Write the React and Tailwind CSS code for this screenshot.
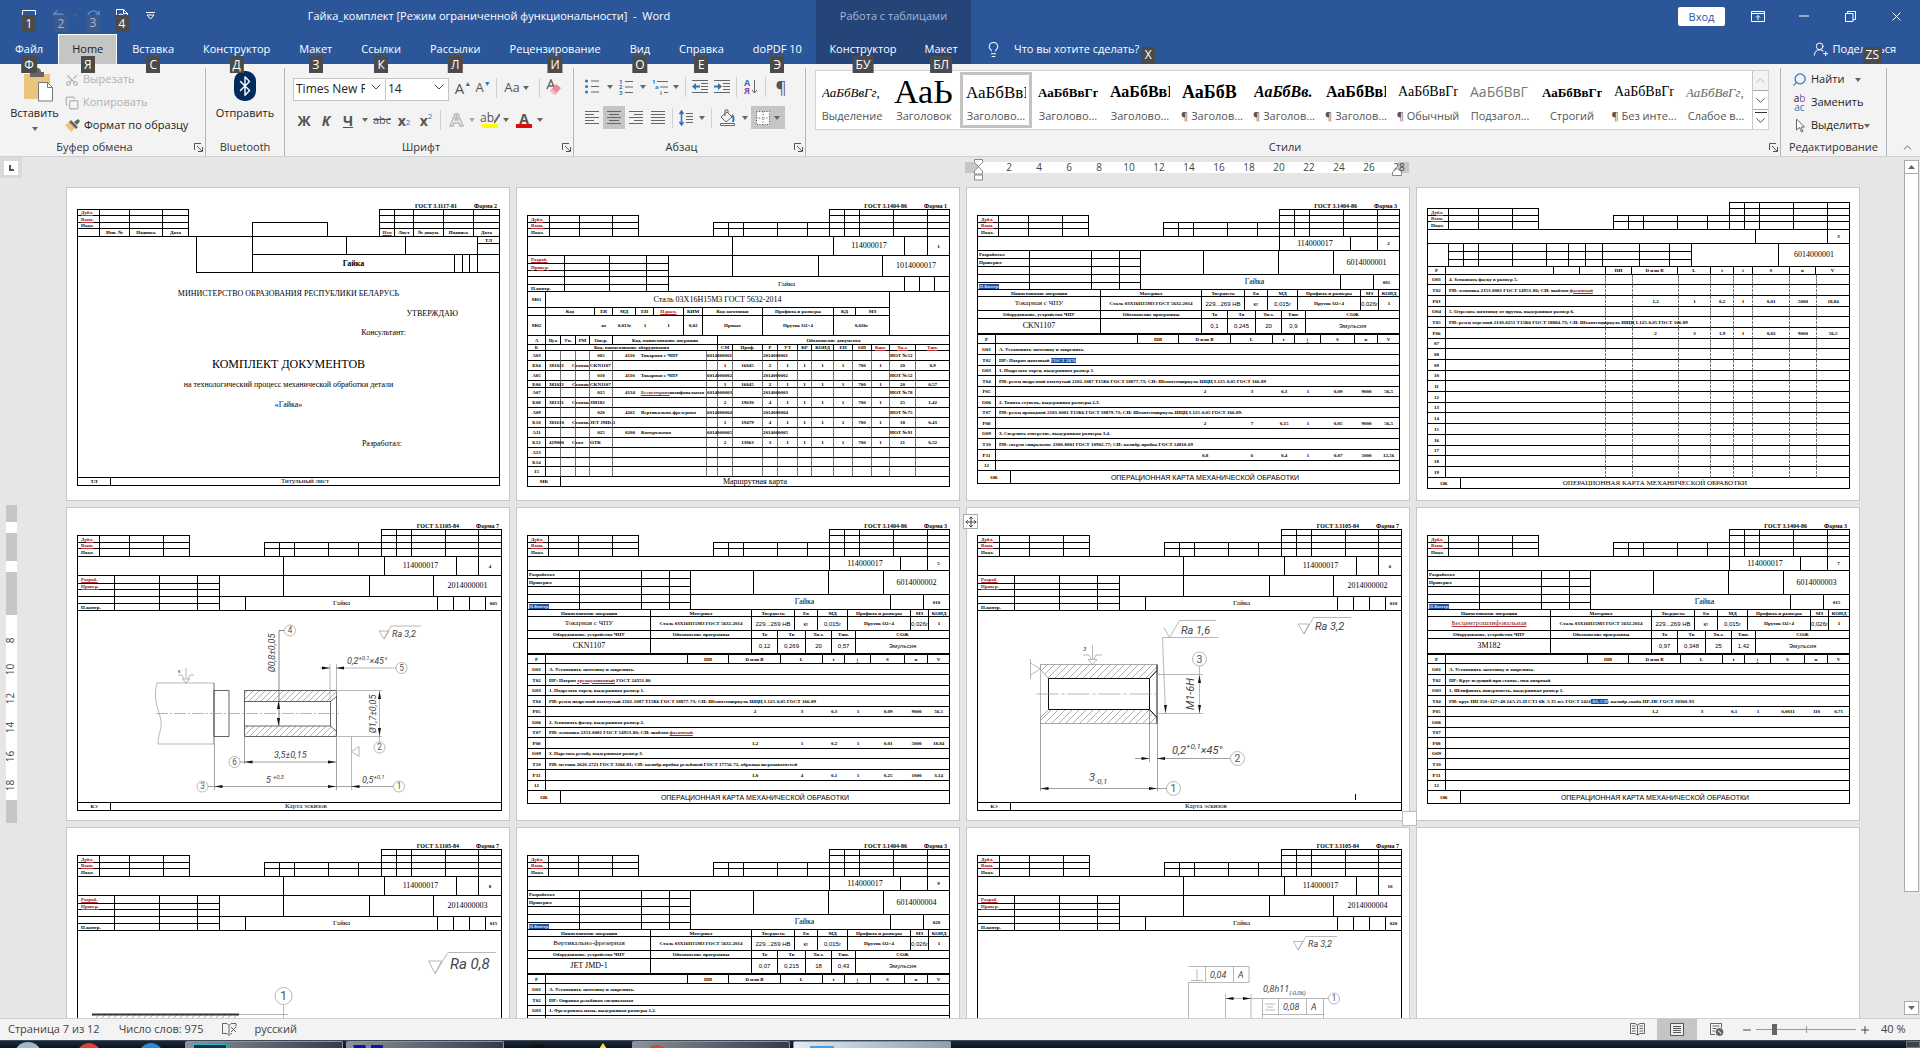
import React, { useState } from "react";
import clsx from "clsx";
import {
  Bluetooth,
  ChevronDown,
  ChevronUp,
  Copy,
  Lightbulb,
  Minus,
  Move,
  Plus,
  RotateCw,
  Scissors,
  Search,
  Undo2,
  UserRoundPlus,
  X,
} from "lucide-react";

/* ---------- small shared pieces ---------- */

const KeyTip = ({ children, faded, className = "-bottom-2.5 left-1/2 -translate-x-1/2" }) => (
  <kbd
    className={clsx(
      "absolute z-10 flex h-[17px] min-w-[14px] items-center justify-center px-[3px] font-['Open_Sans'] text-[12px] leading-none",
      faded ? "bg-[#3c5a8c] text-[#a9b8d3]" : "bg-[#4b4b4b] text-white",
      className
    )}
  >
    {children}
  </kbd>
);

const Caret = ({ className = "w-3" }) => (
  <span className={clsx("flex shrink-0 justify-center", className)}>
    <svg width="6" height="4" viewBox="0 0 6 4">
      <path d="M0 0h6L3 4z" fill="#666" />
    </svg>
  </span>
);

const Sep = () => <span className="mx-[3px] h-5 w-px shrink-0 bg-[#d0d0d0]" />;

const Tool = ({ label, active, className = "w-[22px]", children }) => (
  <button
    aria-label={label}
    className={clsx(
      "flex h-[23px] shrink-0 items-center justify-center text-[#555]",
      active && "bg-[#c5c5c5]",
      className
    )}
  >
    {children}
  </button>
);

const Launcher = () => (
  <button aria-label="Параметры группы" className="absolute right-[2px] bottom-[4px]">
    <svg width="9" height="9" viewBox="0 0 9 9" fill="none" stroke="#555">
      <path d="M.5 7V.5H7M3 3l5 5M8.500 4v4.500H4" />
    </svg>
  </button>
);

const Group = ({ label, launcher, className, children }) => (
  <section className={clsx("relative flex shrink-0 flex-col border-r border-[#b5b5b5]", className)}>
    <div className="min-h-0 flex-1">{children}</div>
    <h2 className="h-[18px] text-center text-[11px] leading-[18px] text-[#333]">{label}</h2>
    {launcher && <Launcher />}
  </section>
);

const Lines = ({ rows, color = "#666" }) => (
  <svg width="16" height="14" viewBox="0 0 16 14" stroke={color}>
    {rows.map(([a, b], i) => (
      <path key={i} d={`M${a} ${i * 3 + 0.5}H${b}`} />
    ))}
  </svg>
);

/* ---------- title bar and tabs ---------- */

const TABS = [
  ["Файл", "Ф"],
  ["Home", "Я"],
  ["Вставка", "С"],
  ["Конструктор", "Д"],
  ["Макет", "З"],
  ["Ссылки", "К"],
  ["Рассылки", "Л"],
  ["Рецензирование", "И"],
  ["Вид", "О"],
  ["Справка", "Е"],
  ["doPDF 10", "Э"],
];

const Tab = ({ label, tip, active, onClick }) => (
  <button
    onClick={onClick}
    className={clsx(
      "relative h-[30px] border px-[13px] text-[11px] whitespace-nowrap",
      active ? "border-white border-b-[#c5c5c5] bg-[#c5c5c5] text-[#222]" : "border-transparent text-white"
    )}
  >
    {label}
    <KeyTip>{tip}</KeyTip>
  </button>
);

const Header = () => {
  const [tab, setTab] = useState("Home");
  return (
    <header className="relative z-20 flex h-16 shrink-0 bg-[#2b579a] text-white">
      <div className="flex w-[816px] shrink-0 flex-col">
        <div className="flex h-[34px] items-center pb-[2px]">
          <div className="flex w-[200px] items-center pl-[22px]">
            <button aria-label="Сохранить" className="relative h-4 w-[14px]">
              <svg width="14" height="14" viewBox="0 0 14 14" fill="none" stroke="#fff">
                <path d="M.5 1.500h13v12H.5zM3 14V8h8v6" />
              </svg>
              <KeyTip className="top-[7px] left-0">1</KeyTip>
            </button>
            <button aria-label="Отменить" className="relative ml-[15px] flex w-6 items-center text-[#6e8dbd]">
              <Undo2 size={16} className="shrink-0" />
              <Caret className="ml-1 w-2 opacity-50" />
              <KeyTip faded className="top-[7px] left-[3px]">2</KeyTip>
            </button>
            <button aria-label="Повторить" className="relative ml-[11px] text-[#6e8dbd]">
              <RotateCw size={15} />
              <KeyTip faded className="top-[6px] left-0">3</KeyTip>
            </button>
            <button aria-label="Просмотр и печать" className="relative ml-[14px] h-4 w-4">
              <svg width="14" height="15" viewBox="0 0 14 15" fill="none" stroke="#fff">
                <path d="M1.500 14V.5h7l4 4V9M8.500.5v4h4" />
                <circle cx="6" cy="8" r="3" />
              </svg>
              <KeyTip className="top-[7px] left-0">4</KeyTip>
            </button>
            <button aria-label="Настройка панели быстрого доступа" className="ml-[15px]">
              <svg width="9" height="8" viewBox="0 0 9 8" fill="none" stroke="#fff">
                <path d="M0 .5h9M1 3l3.500 4L8 3z" />
              </svg>
            </button>
          </div>
          <h1 className="flex-1 pr-[38px] text-center text-[11px] whitespace-pre">
            {"Гайка_комплект [Режим ограниченной функциональности]  -  Word"}
          </h1>
        </div>
        <nav className="flex gap-px pl-[1px]">
          {TABS.map(([label, tip]) => (
            <Tab key={label} label={label} tip={tip} active={tab === label} onClick={() => setTab(label)} />
          ))}
        </nav>
      </div>

      <div className="flex w-[155px] shrink-0 flex-col bg-[#254478]">
        <p className="h-[34px] text-center text-[11px] leading-8 text-[#a3b8da]">Работа с таблицами</p>
        <div className="flex justify-center">
          <Tab label="Конструктор" tip="БУ" />
          <Tab label="Макет" tip="БЛ" />
        </div>
      </div>

      <div className="flex flex-1 flex-col">
        <div className="flex h-[34px] items-center justify-end pr-[16px] pb-[2px]">
          <button className="mr-[26px] h-[19px] w-[47px] rounded-xs bg-white text-[11px] leading-none text-[#2b579a]">
            Вход
          </button>
          <button aria-label="Параметры ленты">
            <svg width="14" height="11" viewBox="0 0 14 11" fill="none" stroke="#fff">
              <path d="M.5.5h13v10H.5zM.5 2.500h13M7 9V4.500M5 6.500l2-2 2 2" />
            </svg>
          </button>
          <button aria-label="Свернуть" className="ml-[34px]">
            <svg width="10" height="2" viewBox="0 0 10 2">
              <path d="M0 1h10" stroke="#fff" />
            </svg>
          </button>
          <button aria-label="Окно" className="ml-[36px]">
            <svg width="11" height="11" viewBox="0 0 11 11" fill="none" stroke="#fff">
              <path d="M.5 2.500h7.500v8H.5zM2.500 2.500v-2h8v8H8" />
            </svg>
          </button>
          <button aria-label="Закрыть" className="ml-[33px]">
            <X size={15} strokeWidth={1.500} />
          </button>
        </div>
        <div className="flex h-[30px] items-center justify-between pr-6 pl-[14px] text-[11px]">
          <button className="relative flex items-center gap-[12px]">
            <Lightbulb size={17} strokeWidth={1.500} />
            Что вы хотите сделать?
            <KeyTip className="top-[6px] -right-4">X</KeyTip>
          </button>
          <button className="relative flex items-center gap-1">
            <UserRoundPlus size={16} strokeWidth={1.500} />
            Поделиться
            <KeyTip className="top-[6px] right-[14px]">ZS</KeyTip>
          </button>
        </div>
      </div>
    </header>
  );
};

/* ---------- ribbon ---------- */

const STYLES = [
  ["АаБбВвГг,", "Выделение", "text-[13px] italic"],
  ["АаЬ", "Заголовок", "text-[34px]"],
  ["АаБбВвГ", "Заголово...", "text-[17px]"],
  ["АаБбВвГг", "Заголово...", "text-[13px] font-bold"],
  ["АаБбВвГ", "Заголово...", "font-['Liberation_Sans'] text-[16px] font-bold"],
  ["АаБбВ", "¶ Заголов...", "text-[18px] font-bold"],
  ["АаБбВв.", "¶ Заголов...", "text-[16px] font-bold italic"],
  ["АаБбВвГ", "¶ Заголов...", "text-[16px] font-bold"],
  ["АаБбВвГг,", "¶ Обычный", "text-[14px]"],
  ["АаБбВвГ", "Подзагол...", "font-['Open_Sans'] text-[14px] text-[#777]"],
  ["АаБбВвГг", "Строгий", "text-[13px] font-bold"],
  ["АаБбВвГг,", "¶ Без инте...", "text-[14px]"],
  ["АаБбВвГг,", "Слабое в...", "text-[13px] text-[#666] italic"],
];

const ClipboardGroup = () => (
  <Group label="Буфер обмена" launcher className="w-[206px] [&>h2]:pr-[16px]">
    <div className="flex pl-2">
      <button className="flex w-[53px] flex-col items-center text-[11px] leading-[18px] text-[#222]">
        <svg className="ml-2 shrink-0" width="30" height="36" viewBox="0 0 30 36">
          <path d="M0 6h26v25H0z" fill="#ecc57c" />
          <path d="M6 4h3a4 4 0 0 1 8 0h3v5H6z" fill="#666" />
          <path d="M14.500 14.500h9l5 5V33h-14z" fill="#fff" stroke="#777" />
          <path d="M23.500 14.500v5h5" fill="none" stroke="#777" />
        </svg>
        Вставить
        <Caret className="mt-[5px]" />
      </button>
      <div className="ml-[4px] flex flex-col text-[11px] text-[#222]">
        <button disabled className="flex h-[23px] items-center gap-1 text-[#b1b1b1]">
          <Scissors size={14} className="-rotate-90" /> Вырезать
        </button>
        <button disabled className="flex h-[23px] items-center gap-1 text-[#b1b1b1]">
          <Copy size={14} /> Копировать
        </button>
        <button className="flex h-[23px] items-center gap-1">
          <svg width="15" height="14" viewBox="0 0 15 14">
            <path d="M0 6l4-3 6 6-4 4z" fill="#ecc57c" />
            <path d="M4 3l2-2 7 7-2 2zM9 3l4-3 2 2-3 4z" fill="#666" />
          </svg>
          Формат по образцу
        </button>
      </div>
    </div>
  </Group>
);

const BluetoothGroup = () => (
  <Group label="Bluetooth" className="w-[79px]">
    <button className="flex w-full flex-col items-center pt-[3px] text-[11px] leading-[18px] text-[#222]">
      <span className="flex h-[30px] w-[22px] items-center justify-center rounded-[10px] bg-[#002b5c] text-white">
        <Bluetooth size={24} strokeWidth={1.500} />
      </span>
      <span className="mt-[3px]">Отправить</span>
    </button>
  </Group>
);

const Combo = ({ label, value, className }) => (
  <label className={clsx("relative block", className)}>
    <span className="sr-only">{label}</span>
    <select
      defaultValue={value}
      className="h-[23px] w-full appearance-none border border-[#c6c6c6] bg-white pr-[20px] pl-[2px] text-[12px] text-[#222]"
    >
      <option>{value}</option>
    </select>
    <ChevronDown size={16} strokeWidth={1.500} className="pointer-events-none absolute top-[4px] right-[2px] text-[#444]" />
  </label>
);

const FontGroup = () => (
  <Group label="Шрифт" launcher className="w-[289px] [&>h2]:pr-[16px]">
    <div className="flex items-center pt-[7px] pl-[8px]">
      <Combo label="Шрифт" value="Times New R" className="w-[93px]" />
      <Combo label="Размер" value="14" className="-ml-px w-[64px]" />
      <Tool label="Увеличить размер" className="ml-1 w-5 text-[15px]">
        A<span className="mb-2 text-[7px] text-[#2e75b6]">▲</span>
      </Tool>
      <Tool label="Уменьшить размер" className="w-5 text-[13px]">
        A<span className="mb-2 text-[7px] text-[#2e75b6]">▼</span>
      </Tool>
      <Sep />
      <Tool label="Регистр" className="w-9 text-[13px]">
        Aa
        <Caret />
      </Tool>
      <Sep />
      <Tool label="Очистить формат">
        <svg width="16" height="18" viewBox="0 0 16 18">
          <path d="M1 10L5 1l4 9M3 7h4" fill="none" stroke="#666" strokeWidth="1.500" />
          <path d="M4 12l6-7 5 4-6 7z" fill="#e8899a" />
          <path d="M4 12l2-2 5 4-2 2z" fill="#f4bac4" />
        </svg>
      </Tool>
    </div>
    <div className="flex items-center pt-[8px] pl-[8px] text-[14px]">
      <Tool label="Полужирный"><b>Ж</b></Tool>
      <Tool label="Курсив"><b><i>К</i></b></Tool>
      <Tool label="Подчеркнутый"><b className="underline">Ч</b></Tool>
      <Caret />
      <Tool label="Зачеркнутый"><s className="text-[11px]">abc</s></Tool>
      <Tool label="Подстрочный"><b>x</b><sub className="text-[8px] text-[#2e75b6]">2</sub></Tool>
      <Tool label="Надстрочный"><b>x</b><sup className="text-[8px] text-[#2e75b6]">2</sup></Tool>
      <Sep />
      <Tool label="Эффекты" className="w-6">
        <svg width="15" height="16" viewBox="0 0 15 16" fill="none" stroke="#b9b9b9" strokeWidth="1.500">
          <path d="M1 14L6 2h3l5 12h-3l-1-3H5l-1 3zM6 8h3L7.500 4z" />
        </svg>
      </Tool>
      <Caret className="w-2 opacity-50" />
      <Tool label="Цвет выделения" className="ml-[2px] w-6 flex-col">
        <span className="flex h-3 text-[12px] leading-none">
          ab
          <svg width="6" height="12" viewBox="0 0 6 12"><path d="M0 11L6 2" stroke="#666" strokeWidth="2" /></svg>
        </span>
        <span className="h-1 w-4 bg-[#ff0]" />
      </Tool>
      <Caret className="w-2" />
      <Tool label="Цвет текста" className="ml-[2px] w-6 flex-col">
        <b className="h-3 leading-none">A</b>
        <span className="h-1 w-4 bg-[#e00b0b]" />
      </Tool>
      <Caret className="w-2" />
    </div>
  </Group>
);

const ParagraphGroup = () => (
  <Group label="Абзац" launcher className="w-[232px] [&>h2]:pr-[16px]">
    <div className="flex items-center pt-[7px] pl-[6px]">
      <Tool label="Маркеры" className="w-6">
        <svg width="14" height="15" viewBox="0 0 14 15">
          <g fill="#2e75b6"><circle cx="1.500" cy="2" r="1.500" /><circle cx="1.500" cy="7.500" r="1.500" /><circle cx="1.500" cy="13" r="1.500" /></g>
          <path d="M6 2h8M6 7.500h8M6 13h8" stroke="#666" />
        </svg>
      </Tool>
      <Caret />
      <Tool label="Нумерация" className="w-5">
        <svg width="14" height="16" viewBox="0 0 14 16">
          <path d="M6 2.500h8M6 8h8M6 13.500h8" stroke="#666" />
          <g fill="#2e75b6" fontSize="6" fontWeight="bold"><text y="5">1</text><text y="10">2</text><text y="16">3</text></g>
        </svg>
      </Tool>
      <Caret className="w-[14px]" />
      <Tool label="Многоуровневый список" className="w-5">
        <svg width="17" height="16" viewBox="0 0 17 16">
          <path d="M5 2.500h11M8 8h8M12 13.500h4" stroke="#666" />
          <g fill="#2e75b6" fontSize="6" fontWeight="bold"><text y="5">1</text><text x="3" y="10">a</text><text x="8" y="16">i</text></g>
        </svg>
      </Tool>
      <Caret />
      <Sep />
      <Tool label="Уменьшить отступ">
        <svg width="16" height="13" viewBox="0 0 16 13">
          <path d="M0 .5h16M9 3.500h7M9 6.500h7M9 9.500h7M0 12.500h16" stroke="#666" />
          <path d="M0 6.500l4-3.500v2.500h4v2H4V10z" fill="#2e75b6" />
        </svg>
      </Tool>
      <Tool label="Увеличить отступ">
        <svg width="16" height="13" viewBox="0 0 16 13">
          <path d="M0 .5h16M9 3.500h7M9 6.500h7M9 9.500h7M0 12.500h16" stroke="#666" />
          <path d="M8 6.500L4 3v2.500H0v2h4V10z" fill="#2e75b6" />
        </svg>
      </Tool>
      <Sep />
      <Tool label="Сортировка">
        <svg width="14" height="17" viewBox="0 0 14 17">
          <text x="0" y="8" fontSize="9" fontWeight="bold" fill="#2e75b6">А</text>
          <text x="0" y="16" fontSize="9" fontWeight="bold" fill="#8450a8">Я</text>
          <path d="M10.500 2v13M8 12l2.500 3 2.500-3" fill="none" stroke="#666" />
        </svg>
      </Tool>
      <Sep />
      <Tool label="Знаки абзаца" className="w-6 text-[17px]">¶</Tool>
    </div>
    <div className="flex items-center pt-[8px] pl-[7px]">
      <Tool label="По левому краю"><Lines rows={[[1, 15], [1, 10], [1, 15], [1, 10], [1, 15]]} /></Tool>
      <Tool label="По центру" active><Lines rows={[[1, 15], [3, 13], [1, 15], [3, 13], [1, 15]]} /></Tool>
      <Tool label="По правому краю"><Lines rows={[[1, 15], [6, 15], [1, 15], [6, 15], [1, 15]]} /></Tool>
      <Tool label="По ширине"><Lines rows={[[1, 15], [1, 15], [1, 15], [1, 15], [1, 15]]} /></Tool>
      <Sep />
      <Tool label="Интервал" className="w-5">
        <svg width="14" height="16" viewBox="0 0 14 16">
          <path d="M7 3.500h7M7 6.500h7M7 9.500h7M7 12.500h7" stroke="#666" />
          <path d="M2.500 1v14M.5 4l2-3 2 3M.5 12l2 3 2-3" fill="none" stroke="#2e75b6" strokeWidth="1.500" />
        </svg>
      </Tool>
      <Caret />
      <Sep />
      <Tool label="Заливка" className="w-6">
        <svg width="17" height="17" viewBox="0 0 17 17" fill="none" stroke="#666">
          <path d="M2 8l6-5 5 5-6 5zM6 7V1h3v3" />
          <path d="M13 6c2 2 2 4 1 7" stroke="#2e75b6" strokeWidth="2" />
          <path d="M1.500 14.500h14v2h-14z" fill="#fff" />
        </svg>
      </Tool>
      <Caret />
      <Tool label="Границы" active className="w-[34px]">
        <svg width="14" height="14" viewBox="0 0 14 14" stroke="#555" fill="#fff">
          <path d="M.5.5h13v13H.5zM.5 7h13M7 .5v13" strokeDasharray="1 1.500" />
        </svg>
        <Caret className="ml-1" />
      </Tool>
    </div>
  </Group>
);

const StylesGroup = () => {
  const [picked, setPicked] = useState(2);
  return (
    <Group label="Стили" launcher className="min-w-0 flex-1 [&>h2]:pr-[16px]">
      <div className="mt-[2px] mr-[11px] ml-[9px] flex h-[60px] border border-[#d2d2d2] bg-white">
        <div className="flex flex-1 justify-start">
          {STYLES.map(([sample, name, cls], i) => (
            <button
              key={i}
              onClick={() => setPicked(i)}
              className={clsx(
                "mt-px flex h-[56px] max-w-[72px] flex-1 flex-col items-center border-3 px-[3px] pt-[2px]",
                picked === i ? "border-[#c3c3c3]" : "border-transparent"
              )}
            >
              <span
                className={clsx(
                  "flex h-[31px] w-[60px] items-center overflow-hidden font-['Liberation_Serif'] leading-none whitespace-nowrap",
                  cls
                )}
              >
                {sample}
              </span>
              <span className="text-[11px] leading-[18px] whitespace-nowrap text-[#555]">{name}</span>
            </button>
          ))}
        </div>
        <div className="flex w-[16px] flex-col border-l border-[#c6c6c6] text-[#444]">
          <button aria-label="Вверх" className="flex flex-1 items-center justify-center bg-[#f3f3f3] text-[#bbb]">
            <ChevronUp size={15} strokeWidth={1.500} />
          </button>
          <button aria-label="Вниз" className="flex flex-1 items-center justify-center border-y border-[#aaa]">
            <ChevronDown size={15} strokeWidth={1.500} />
          </button>
          <button aria-label="Все стили" className="flex flex-1 flex-col items-center justify-center">
            <span className="h-px w-3 bg-[#333]" />
            <ChevronDown size={15} strokeWidth={1.500} />
          </button>
        </div>
      </div>
    </Group>
  );
};

const EditingGroup = () => (
  <Group label="Редактирование" className="w-[106px]">
    <div className="flex flex-col items-start pl-[11px] text-[11px] text-[#222]">
      <button className="flex h-[23px] items-center gap-1">
        <Search size={15} className="-scale-x-100 text-[#2e75b6]" /> Найти <Caret className="ml-1 w-3" />
      </button>
      <button className="flex h-[23px] items-center gap-1">
        <span className="w-[15px] text-[10px] leading-[9px]">
          a<span className="text-[#8450a8]">b</span>
          <br />
          <span className="text-[#2e75b6]">ac</span>
        </span>
        Заменить
      </button>
      <button className="flex h-[23px] items-center gap-1">
        <svg width="15" height="15" viewBox="0 0 15 15" fill="#fff" stroke="#666">
          <path d="M4.500 1v11l3-2.500 2 4.500 1.500-.7-2-4.300h3.500z" />
        </svg>
        Выделить <Caret className="-ml-1" />
      </button>
    </div>
  </Group>
);

const Ribbon = () => (
  <div className="flex h-[93px] shrink-0 border-b border-[#cfcfcf] bg-[#f3f3f3] pt-[4px]">
    <ClipboardGroup />
    <BluetoothGroup />
    <FontGroup />
    <ParagraphGroup />
    <StylesGroup />
    <EditingGroup />
    <button aria-label="Свернуть ленту" className="flex w-[33px] items-end justify-center pb-[2px] pl-2 text-[#444]">
      <ChevronUp size={13} strokeWidth={1.500} />
    </button>
  </div>
);

/* ---------- document forms ---------- */

// x and y are the positions of the ruled lines; every cell owns its right and bottom line.
// A cell is a string or [content, extra classes].
const Grid = ({ x, y, rows = [], inner = "", className }) => {
  const widths = x.slice(1).map((edge, i) => edge - x[i]);
  const heights = y.slice(1).map((edge, i) => edge - y[i]);
  return (
    <div className={clsx("shrink-0 border-black", className)}>
      <table className="table-fixed border-separate border-spacing-0" style={{ width: x[x.length - 1] - x[0] }}>
        <colgroup>
          {widths.map((w, i) => (
            <col key={i} style={{ width: w }} />
          ))}
        </colgroup>
        <tbody>
          {heights.map((h, r) => (
            <tr key={r} style={{ height: h }}>
              {widths.map((_, c) => {
                const cell = rows[r]?.[c];
                const [content, cls] = Array.isArray(cell) ? cell : [cell];
                return (
                  <td
                    key={c}
                    className={clsx(
                      "border-r border-b border-black p-0 text-center align-middle whitespace-nowrap",
                      c > 0 && c < widths.length - 1 && inner,
                      cls
                    )}
                  >
                    {content}
                  </td>
                );
              })}
            </tr>
          ))}
        </tbody>
      </table>
    </div>
  );
};

const Bad = ({ children }) => (
  <span className="text-[#8c0f0f] underline decoration-[#c03030]">{children}</span>
);
const Picked = ({ children }) => <span className="bg-[#1d4fa3] text-[#cfe0ff]">{children}</span>;

const L = "text-left! pl-[3px]!";
const NUM = "text-[8px] font-normal";
const MID = "text-[7px] font-normal";
const SANS = "font-['Liberation_Sans'] text-[6px] font-normal";

const FormTitle = ({ gost, form }) => (
  <div className="flex h-[7px] justify-end gap-[17px] pt-px pr-[3px] text-[6px] leading-[6px] font-bold">
    <span>{gost}</span>
    <span>{form}</span>
  </div>
);

const LEFT_ROWS = [[[<Bad>Дубл.</Bad>, L]], [[<Bad>Взам.</Bad>, L]], [["Подл.", L]]];

const FormHead = ({ left, mid, right }) => (
  <div className="-mb-px flex items-end">
    <Grid className="border-t border-l" x={left} y={[35, 42, 48, 56]} rows={LEFT_ROWS} />
    <Grid className="ml-auto border-t border-l" x={mid} y={[42, 48, 56]} />
    <Grid className="-ml-px border-t border-l" x={right} y={[29, 35, 42, 48, 56]} />
  </div>
);

const Frame = ({ children }) => <div className="border-t border-l border-black">{children}</div>;

const Page = ({ children }) => (
  <article className="h-[314px] w-[444px] shrink-0 overflow-hidden border border-[#c6c6c6] bg-white pt-[14px] pl-[10px] font-['Liberation_Serif'] text-[5px] leading-none font-bold text-black">
    {children}
  </article>
);

const Footer = ({ right = 439, y, code, title, cls }) => (
  <Grid x={[17, 50, right]} y={y} rows={[[code, [title, cls]]]} />
);

const TitlePage = () => (
  <Page>
    <div className="w-[423px]">
      <FormTitle gost="ГОСТ 3.1117-81" form="Форма 2" />
      <div className="-mb-px flex items-end">
        <Grid
          className="border-t border-l"
          x={[17, 39, 69, 102, 128]}
          y={[29, 35, 42, 48, 56]}
          rows={[...LEFT_ROWS, ["", "Инв. №", "Подпись", "Дата"]]}
        />
        <Grid className="ml-[63px] border-t border-l" x={[192, 267]} y={[42, 56]} />
        <Grid
          className="ml-auto border-t border-l"
          x={[319, 334, 353, 383, 413, 439]}
          y={[29, 35, 42, 48, 56]}
          rows={[[], [], [], [<Bad>Изм</Bad>, "Лист", "№ докум.", "Подпись", "Дата"]]}
        />
      </div>
      <Frame>
        <div className="flex">
          <Grid x={[17, 136, 192]} y={[56, 74]} rows={[[["", "border-b-0!"], ["", "border-b-0!"]]]} />
          <Grid x={[192, 286, 345, 417]} y={[56, 74]} />
          <Grid x={[417, 439]} y={[56, 63, 74]} rows={[["ТЛ"]]} />
        </div>
        <Grid
          x={[17, 136, 192, 394, 402, 409, 417, 439]}
          y={[74, 92]}
          rows={[[["", "border-b-0!"], "", ["Гайка", "text-[8px]"]]]}
        />
        <div className="flex h-[205px] flex-col border-r border-b border-black text-center text-[8px] font-normal">
          <p className="mt-[17px]">МИНИСТЕРСТВО ОБРАЗОВАНИЯ РЕСПУБЛИКИ БЕЛАРУСЬ</p>
          <p className="mt-[12px] pr-[41px] text-right">УТВЕРЖДАЮ</p>
          <p className="mt-[11px] pr-[93px] text-right">Консультант:</p>
          <p className="mt-[21px] text-[12px]">КОМПЛЕКТ ДОКУМЕНТОВ</p>
          <p className="mt-[11px]">на технологический процесс механической обработки детали</p>
          <p className="mt-[12px]">«Гайка»</p>
          <p className="mt-[31px] pr-[97px] text-right">Разработал:</p>
        </div>
        <Footer y={[297, 305]} code="ТЛ" title="Титульный лист" cls={MID} />
      </Frame>
    </div>
  </Page>
);

const TL = "text-left!";
const opRow = (code, num, kod, name, doc, iot) => [
  code, "", "", "", num,
  [<span className="pl-[12px]"><span className="mr-[6px]">{kod}</span>{name}</span>, TL],
  [doc && `6014${doc}`, TL], "", "",
  [doc && `2014${doc}`, TL], "", "", "", "", "", "",
  [iot, TL], "",
];
const eqRow = (code, kod, kind, model, sm, prof, r, tpz, tsht) => [
  code, [kod, L], ["", TL], [kind, "-indent-[4px] text-left!"], [model, TL], "", "",
  sm, prof, r, "1", "1", "1", "1", "700", "1", tpz, tsht,
];

const RoutePage = () => (
  <Page>
    <div className="w-[423px]">
      <FormTitle gost="ГОСТ 3.1404-86" form="Форма 1" />
      <FormHead left={[17, 39, 69, 102, 128]} mid={[203, 218, 233, 267, 297, 319]} right={[319, 334, 349, 383, 417, 439]} />
      <Frame>
        <Grid x={[17, 222, 323, 394, 417, 439]} y={[56, 75]} rows={[["", "", ["114000017", NUM], "", "1"]]} />
        <div className="flex">
          <Grid x={[17, 54, 99, 136, 158]} y={[75, 83, 90, 96]} rows={[[[<Bad>Разраб.</Bad>, L]], [[<Bad>Провер.</Bad>, L]]]} />
          <Grid x={[158, 222, 308, 372, 439]} y={[75, 96]} rows={[["", "", "", ["1014000017", NUM]]]} />
        </div>
        <div className="flex">
          <Grid x={[17, 54, 99, 136, 158]} y={[96, 104, 111]} rows={[[], [["Н.контр.", L]]]} />
          <Grid x={[158, 394, 409, 424, 439]} y={[96, 111]} rows={[[["Гайка", MID]]]} />
        </div>
        <div className="flex">
          <div>
            <Grid x={[17, 35, 379]} y={[111, 127]} rows={[["М01", ["Сталь 03Х16Н15М3 ГОСТ 5632-2014", NUM]]]} />
            <Grid
              x={[17, 35, 84, 102, 125, 143, 173, 192, 252, 323, 345, 379]}
              y={[127, 135]}
              rows={[["", "Код", "ЕВ", "МД", "ЕН", <Bad>Н.расх.</Bad>, "КИМ", "Код заготовки", "Профиль и размеры", "КД", "МЗ"]]}
            />
            <Grid
              x={[17, 35, 84, 102, 125, 143, 173, 192, 252, 323, 379]}
              y={[135, 155]}
              rows={[[
                "М02", ["", "border-r-0!"], ["кг", "border-r-0!"], ["0,013г", "border-r-0!"], ["1", "border-r-0!"],
                "1", "0,02", "Прокат", "Пруток О2×4", "0,026г",
              ]]}
            />
          </div>
          <Grid x={[379, 439]} y={[111, 155]} />
        </div>
        <Grid
          x={[17, 35, 50, 65, 79, 102, 207, 439]}
          y={[155, 164]}
          rows={[["А", "Цех", "Уч.", "РМ", "Опер.", "Код, наименование операции", "Обозначение документа"]]}
        />
        <Grid
          x={[17, 35, 207, 222, 252, 267, 287, 301, 323, 342, 361, 379, 405, 439]}
          y={[164, 170]}
          rows={[[
            "Б", "Код, наименование оборудования", "СМ", "Проф.", "Р", "УТ", "КР", "КОИД", "ЕН", "ОП",
            <Bad>Кшт.</Bad>, <Bad>Тп.з.</Bad>, <Bad>Тшт.</Bad>,
          ]]}
        />
        <Grid
          inner="border-r-neutral-500"
          x={[17, 35, 50, 65, 79, 102, 196, 207, 222, 252, 267, 287, 301, 323, 342, 361, 379, 405, 439]}
          y={[170, 180, 190, 200, 207, 217, 227, 237, 247, 257, 267, 277, 286, 296]}
          rows={[
            opRow("А03", "005", "4110", "Токарная с ЧПУ", "000001", "ИОТ №52"),
            eqRow("Б04", "381021", "Станок", "CKN1107", "1", "16045", "2", "20", "0,9"),
            opRow("А05", "010", "4110", "Токарная с ЧПУ", "000002", "ИОТ №52"),
            eqRow("Б06", "381021", "Станок", "CKN1107", "1", "16045", "2", "20", "0,57"),
            opRow("А07", "015", "4134", <><Bad>Бесцентрово</Bad>шлифовальная</>, "000003", "ИОТ №78"),
            eqRow("Б08", "381311", "Станок", "3М182", "2", "19630", "4", "25", "1,42"),
            opRow("А09", "020", "4261", "Вертикально-фрезерная", "000004", "ИОТ №75"),
            eqRow("Б10", "381610", "Станок", "JET JMD-1", "1", "19479", "4", "18", "0,43"),
            opRow("А11", "025", "0200", "Контрольная", "000005", "ИОТ №91"),
            eqRow("Б12", "419000", "Стол", "ОТК", "2", "13063", "3", "21", "0,52"),
            ["А13"],
            ["Б14"],
            ["15"],
          ]}
        />
        <Footer y={[296, 306]} code="МК" title="Маршрутная карта" cls={NUM} />
      </Frame>
    </div>
  </Page>
);

const FOOT_TITLE = "ОПЕРАЦИОННАЯ КАРТА МЕХАНИЧЕСКОЙ ОБРАБОТКИ";
const STEP_CODES = ["О01", "Т02", "О03", "Т04", "Р05", "О06", "Т07", "Р08", "О09", "Т10", "Р11", "12"];

// A step is either a line of text or a list of cutting modes; the modes fill the last seven columns.
const stepRow = (code, step) => (step?.modes ? [code, "", "", ...step.modes] : [code, [step, L]]);

const OperationPage = ({ sheet, doc, num, name, model, times, steps }) => (
  <Page>
    <div className="w-[423px]">
      <FormTitle gost="ГОСТ 3.1404-86" form="Форма 3" />
      <FormHead left={[17, 38, 68, 102, 128]} mid={[203, 218, 233, 267, 297, 319]} right={[319, 334, 349, 383, 417, 439]} />
      <Frame>
        <Grid x={[17, 319, 390, 417, 439]} y={[56, 70]} rows={[["", ["114000017", NUM], "", sheet]]} />
        <div className="flex">
          <Grid
            x={[17, 69, 131, 159, 180]}
            y={[70, 78, 86, 94]}
            rows={[[["Разработал", "text-left! pl-px!"]], [["Проверил", "text-left! pl-px!"]]]}
          />
          <Grid x={[180, 243, 318, 373, 439]} y={[70, 94]} rows={[["", "", "", [doc, NUM]]]} />
        </div>
        <div className="flex">
          <Grid x={[17, 69, 131, 159, 180]} y={[94, 102, 109]} rows={[[], [[<Picked>Н.Контр.</Picked>, "text-left! pl-px!"]]]} />
          <Grid x={[180, 380, 413, 439]} y={[94, 109]} rows={[[["Гайка", "pl-[28px]! text-[8px] font-normal"], "", num]]} />
        </div>
        <Grid
          x={[17, 140, 241, 284, 307, 337, 400, 418, 439]}
          y={[109, 116, 130]}
          rows={[
            ["Наименование операции", "Материал", "Твердость", "Ев", "МД", "Профиль и размеры", "МЗ", "КОИД"],
            [
              [name, MID], "Сталь 03Х16Н15М3 ГОСТ 5632-2014", ["229...269 НВ", SANS], ["кг", SANS],
              ["0,015г", SANS], "Пруток О2×4", ["0,026г", SANS], "1",
            ],
          ]}
        />
        <Grid
          x={[17, 140, 241, 267, 295, 321, 345, 439]}
          y={[130, 138, 153]}
          rows={[
            ["Оборудование, устройство ЧПУ", "Обозначение программы", "То", "Тв", "Тп.з.", "Тшт.", "СОЖ"],
            [[model, NUM], "", ...times.map((t) => [t, SANS]), ["Эмульсия", SANS]],
          ]}
        />
        <Grid
          className="border-t"
          x={[17, 35, 177, 218, 270, 312, 334, 360, 394, 417, 439]}
          y={[154, 163]}
          rows={[["Р", "", "ПИ", "D или B", "L", "t", <Bad>i</Bad>, "S", "n", "V"]]}
        />
        <Grid
          inner="border-r-0!"
          x={[17, 35, 177, 218, 270, 312, 334, 360, 394, 417, 439]}
          y={[163, 174, 185, 195, 206, 216, 227, 237, 248, 258, 269, 280, 290]}
          rows={STEP_CODES.map((code, i) => stepRow(code, steps[i]))}
        />
        <Footer y={[290, 303]} code="ОК" title={FOOT_TITLE} cls="font-['Liberation_Sans'] text-[7px] font-normal" />
      </Frame>
    </div>
  </Page>
);

const CONT_CODES = [
  "О01", "Т02", "Р03", "О04", "Т05", "Р06", "07", "08", "09", "10",
  "11", "12", "13", "14", "15", "16", "17", "18", "19",
];
const CONT_STEPS = [
  "4. Зенковать фаску в размер 5.",
  <>РИ: зенковка 2353-0081 ГОСТ 14953-80; СИ: шаблон <Bad>фасонный</Bad></>,
  { modes: ["1,2", "1", "0,2", "1", "0,01", "5000", "18,84"] },
  "5. Отрезать заготовку от прутка, выдерживая размер 6.",
  "РИ: резец отрезной 2130-0251 Т15К6 ГОСТ 18884-73; СИ: Штангенциркуль ШЦЦ I-125-0,05 ГОСТ 166-89",
  { modes: ["2", "3", "1,9", "1", "0,02", "9000", "56,5"] },
];

const ContinuationPage = () => (
  <Page>
    <div className="w-[423px]">
      <FormHead left={[17, 38, 68, 102, 128]} mid={[203, 218, 233, 267, 297, 319]} right={[319, 334, 349, 383, 417, 439]} />
      <Frame>
        <Grid x={[17, 345, 417, 439]} y={[49, 63]} rows={[["", "", "3"]]} />
        <div className="flex">
          <Grid x={[17, 38]} y={[63, 86]} />
          <Grid x={[38, 53, 68, 102, 136, 158, 175, 192, 229, 259, 281]} y={[63, 71, 79, 86]} />
          <Grid x={[281, 368, 439]} y={[63, 86]} rows={[["", ["6014000001", NUM]]]} />
        </div>
        <Grid
          x={[17, 35, 143, 169, 195, 221, 267, 300, 323, 342, 379, 405, 439]}
          y={[86, 94]}
          rows={[["Р", "", "", "", "ПИ", "D или B", "L", "t", "i", "S", "n", "V"]]}
        />
        <Grid
          inner="border-r-neutral-500 [border-right-style:dashed]!"
          x={[17, 35, 195, 222, 268, 300, 323, 342, 379, 406, 439]}
          y={[94, 104, 115, 126, 136, 147, 158, 168, 179, 190, 200, 211, 222, 232, 243, 254, 265, 275, 286, 297]}
          rows={CONT_CODES.map((code, i) => stepRow(code, CONT_STEPS[i]))}
        />
        <Footer y={[297, 308]} code="ОК" title={FOOT_TITLE} cls={MID} />
      </Frame>
    </div>
  </Page>
);

const SketchPage = ({ sheet, doc, num, children }) => (
  <Page>
    <div className="w-[425px]">
      <FormTitle gost="ГОСТ 3.1105-84" form="Форма 7" />
      <FormHead left={[17, 39, 69, 103, 129]} mid={[204, 219, 234, 268, 298, 321]} right={[321, 336, 351, 385, 418, 441]} />
      <Frame>
        <Grid x={[17, 223, 324, 396, 418, 441]} y={[56, 75]} rows={[["", "", ["114000017", NUM], "", sheet]]} />
        <div className="flex">
          <Grid x={[17, 54, 99, 137, 159]} y={[75, 83, 89, 96]} rows={[[[<Bad>Разраб.</Bad>, L]], [[<Bad>Провер.</Bad>, L]]]} />
          <Grid x={[159, 223, 309, 373, 441]} y={[75, 96]} rows={[["", "", "", [doc, NUM]]]} />
        </div>
        <div className="flex">
          <Grid x={[17, 54, 99, 137, 159]} y={[96, 103, 110]} rows={[[], [["Н.контр.", L]]]} />
          <Grid x={[159, 185, 377, 393, 409, 425, 441]} y={[96, 110]} rows={[["", ["Гайка", MID], "", "", "", num]]} />
        </div>
        <div className="border-r border-b border-black">
          <svg
            width="423"
            height="191"
            viewBox="18 111 423 191"
            fill="none"
            stroke="#999"
            strokeWidth="0.7"
            className="font-['Roboto'] font-normal italic"
          >
            {children}
          </svg>
        </div>
        <Footer right={441} y={[302, 310]} code="КЭ" title="Карта эскизов" cls={MID} />
      </Frame>
    </div>
  </Page>
);

/* ---------- sketches ---------- */

const Note = ({ x, y, size = 9, turn, children }) => (
  <text
    x={x}
    y={y}
    fontSize={size}
    fill="#444"
    stroke="none"
    textAnchor={turn ? "middle" : "start"}
    transform={turn ? `rotate(-90 ${x} ${y})` : undefined}
  >
    {children}
  </text>
);

const Mark = ({ x, y, r = 5.5, children }) => (
  <g>
    <circle cx={x} cy={y} r={r} />
    <text x={x} y={y + r / 2 + 0.2} fontSize={r * 1.5} fill="#555" stroke="none" textAnchor="middle" fontStyle="normal">
      {children}
    </text>
  </g>
);

const ARROWS = { r: "-8 -1.500v3", l: "8 -1.500v3", d: "-1.500 -8h3", u: "-1.500 8h3" };
const Arrow = ({ x, y, to }) => <path d={`M${x} ${y}l${ARROWS[to]}z`} fill="#111" stroke="none" />;

const Hatch = ({ id, step = 6 }) => (
  <defs>
    <pattern id={id} width={step} height={step} patternUnits="userSpaceOnUse">
      <path d={`M0 ${step}L${step} 0`} stroke="#777" strokeWidth="0.6" />
    </pattern>
  </defs>
);

const SketchTurning = () => (
  <>
    <Hatch id="h5" />
    <path d="M154 183H97c-6 20 6 32 4 44-1 6-3 10-3 17h56" />
    <path d="M154 183v61" stroke="#333" />
    <path d="M154 190.500h15v46h-15z" stroke="#222" />
    <path d="M184.500 190.500h92v6l-6 5h-86zM184.500 236.500h92v-5l-6-5.500h-86z" fill="url(#h5)" stroke="#222" />
    <path d="M184.500 201v25M276.500 196v36M270.500 201v25" stroke="#222" />
    <path d="M96 213.500h183" strokeDasharray="12 2 2 2" />
    <path d="M122.500 179h7l-3.500 4zM126 168v10M118 175h4l2 4M134 175h-4l-2 4" />
    <Note x={118} y={173} size={5}>к</Note>
    <path d="M224 130.500h-5V226" stroke="#555" />
    <Arrow x={218.5} y={201} to="u" />
    <Arrow x={218.5} y={226} to="d" />
    <Mark x={230} y={130.5}>4</Mark>
    <Note x={215} y={153} turn>Ø0,8±0,05</Note>
    <path d="M319 131h10l-5 8zM324 139l7-13h30" />
    <Note x={332} y={137}>Ra 3,2</Note>
    <Note x={287} y={164}>0,2<tspan dy="-4" fontSize="6">+0,1</tspan><tspan dy="4">×45°</tspan></Note>
    <path d="M260 168h10M276 168h60M270 164v38M276.500 164v32" />
    <Arrow x={270} y={168} to="r" />
    <Arrow x={276} y={168} to="l" />
    <Mark x={341.5} y={168}>5</Mark>
    <path d="M276 190.500h46M276 236.500h46M319.500 190v52" />
    <Arrow x={319.5} y={191} to="u" />
    <Arrow x={319.5} y={236} to="d" />
    <Note x={316} y={214} turn>Ø1,7±0,05</Note>
    <Mark x={319.5} y={247.5}>2</Mark>
    <path d="M291.500 237v53M291.500 251.500l7.500-5v10z" />
    <path d="M184.500 237v27M180 262h96M154.500 244v46M276.500 237v53M148 286.500h128M276 286.500h57" stroke="#777" />
    <Arrow x={184.5} y={262} to="l" />
    <Arrow x={276} y={262} to="r" />
    <Arrow x={154.5} y={286.5} to="l" />
    <Arrow x={276} y={286.5} to="r" />
    <Arrow x={291.5} y={286.5} to="l" />
    <Mark x={174.5} y={262}>6</Mark>
    <Mark x={142.5} y={286.5}>3</Mark>
    <Mark x={339} y={286.5}>1</Mark>
    <Note x={214} y={258}>3,5±0,15</Note>
    <Note x={206} y={283}>5<tspan dy="-4" dx="2" fontSize="6">+0,3</tspan></Note>
    <Note x={302} y={283}>0,5<tspan dy="-4" fontSize="6">+0,1</tspan></Note>
  </>
);

const SketchThread = () => (
  <>
    <Hatch id="h7" step={7} />
    <path d="M80.500 164.500H197v6l-8 8H88.500l-8-9zM80.500 223.500H197v-6l-8-8H88.500l-8 8z" fill="url(#h7)" stroke="#888" />
    <path d="M80.500 164.500v59" />
    <path d="M88.500 178.500h101v31h-101zM197 164.500v59M189.500 178.500l7.500-8M189.500 209.500l7.500 8" stroke="#111" strokeWidth="1" />
    <path d="M76.500 194h124" strokeDasharray="22 3 3 3" />
    <path d="M70.500 159v20M70.500 163l10 6-10 6" />
    <path d="M128 159.500h9l-4.500 5zM132.500 145v14M123 155h6l2 4M142 155h-6l-2 4" />
    <Note x={123} y={151} size={6}>3</Note>
    <path d="M204 127.500l5.500 10 10-17H256M202.500 137.500h56M202.500 137.500l3 76" />
    <Arrow x={205.5} y={213} to="d" />
    <Note x={221} y={134} size={11}>Ra 1,6</Note>
    <path d="M197 174.500h46M197 213.500h46M239.500 166v47" />
    <Arrow x={239.5} y={175} to="u" />
    <Arrow x={239.5} y={213} to="d" />
    <Mark x={239.5} y={159} r={7}>3</Mark>
    <Note x={234} y={194} size={11} turn>М1-6Н</Note>
    <path d="M338 124h11l-5 10zM344 134l9.500-16.500H391" />
    <Note x={355} y={130} size={11}>Ra 3,2</Note>
    <path d="M175 258.500h14M197 258.500h73M189.500 210v52M80.500 223v68M197.500 223v68M80.500 288.500H207" stroke="#777" />
    <Arrow x={189.5} y={258.5} to="r" />
    <Arrow x={197} y={258.5} to="l" />
    <Arrow x={80.5} y={288.5} to="l" />
    <Arrow x={197} y={288.5} to="r" />
    <Mark x={277.5} y={258.5} r={7}>2</Mark>
    <Mark x={213.5} y={288.5} r={7}>1</Mark>
    <Note x={212} y={254} size={11}>0,2<tspan dy="-5" fontSize="8">+0,1</tspan><tspan dy="5">×45°</tspan></Note>
    <Note x={129} y={281} size={11}>3<tspan dy="3" fontSize="8">-0,1</tspan></Note>
    <path d="M395.500 294v6" stroke="#000" strokeWidth="1" />
  </>
);

const SketchGrinding = () => (
  <>
    <Hatch id="h9" />
    <path d="M368.500 141h13l-6.500 12.500zM375 153.500l13-21h48" />
    <Note x={390} y={149} size={15}>Ra 0,8</Note>
    <path d="M32 194h146v30H32z" fill="url(#h9)" stroke="none" />
    <path d="M32 194.500h147" stroke="#333" strokeWidth="2" />
    <path d="M179 194.500h49M223.500 185v40" />
    <Mark x={223.5} y={176} r={8.5}>1</Mark>
  </>
);

const SketchMilling = () => (
  <>
    <path d="M333.500 121.500h9.500l-5 8.500zM338 130l8-13.500h31" />
    <Note x={348} y={127}>Ra 3,2</Note>
    <path d="M228.500 146.500H289v16h-60.500V300M245.500 146.500v16M273.500 146.500v16M237 149v11M231 160.500h12" />
    <Note x={250} y={158}>0,04</Note>
    <Note x={278} y={158}>А</Note>
    <Note x={303} y={172}>0,8h11<tspan dy="3" fontSize="6">(-0,06)</tspan></Note>
    <path d="M265.500 174v100M291 174v100M265.500 178.500H368M302.500 178.500v50M363.500 178.500v50M302.500 194.500h61M318.500 178.500v16M346.500 178.500v16" />
    <path d="M305 184h10M307 187h6M305 190h10" />
    <Arrow x={265.5} y={178.5} to="l" />
    <Arrow x={291} y={178.5} to="r" />
    <Note x={323} y={190}>0,08</Note>
    <Note x={351} y={190}>А</Note>
    <Mark x={374} y={178.5}>1</Mark>
  </>
);

/* ---------- document area ---------- */

const SET_UP = "А. Установить заготовку и закрепить.";
const FACE = [
  "1. Подрезать торец, выдерживая размер 1.",
  "РИ: резец подрезной отогнутый 2102-1087 Т15К6 ГОСТ 18877-73; СИ: Штангенциркуль ШЦЦ I-125-0,05 ГОСТ 166-89",
  { modes: ["2", "3", "0,3", "1", "0,09", "9000", "56,5"] },
];

const OP_005 = [
  SET_UP,
  <>ПР: Патрон цанговый <Picked>ГОСТ 2876</Picked></>,
  ...FACE,
  "2. Точить ступень, выдерживая размеры 2,3.",
  "РИ: резец проходной 2103-0001 Т15К6 ГОСТ 18879-73; СИ: Штангенциркуль ШЦЦ I-125-0,05 ГОСТ 166-89.",
  { modes: ["2", "7", "0,15", "1", "0,05", "9000", "56,5"] },
  "3. Сверлить отверстие, выдерживая размеры 3,4.",
  "РИ: сверло спиральное 2300-8001 ГОСТ 10902-77; СИ: калибр-пробка ГОСТ 14810-69",
  { modes: ["0,8", "6", "0,4", "1", "0,07", "5000", "12,56"] },
];

const OP_010 = [
  SET_UP,
  <>ПР: Патрон <Bad>трехкулачковый</Bad> ГОСТ 24351-80</>,
  ...FACE,
  "2. Зенковать фаску, выдерживая размер 2.",
  <>РИ: зенковка 2353-0081 ГОСТ 14953-80; СИ: шаблон <Bad>фасонный</Bad></>,
  { modes: ["1,2", "1", "0,2", "1", "0,01", "5000", "18,84"] },
  "3. Нарезать резьбу, выдерживая размер 3.",
  "РИ: метчик 2620-2721 ГОСТ 3266-81; СИ: калибр-пробка резьбовой ГОСТ 17756-72, образцы шероховатостей",
  { modes: ["1,0", "4", "0,1", "1", "0,25", "1000", "3,14"] },
];

const OP_015 = [
  SET_UP,
  "ПР: Круг ведущий при станке, нож опорный",
  "1. Шлифовать поверхность, выдерживая размер 1.",
  <>РИ: круг ПП 350×127×40 24А 25-Н СТ1 6К А 35 м/с ГОСТ 2424<Picked>-83; СИ</Picked>: калибр-скоба ПР-НЕ ГОСТ 18360-93</>,
  { modes: ["1,2", "3", "0,1", "1", "0,0011", "110", "0,71"] },
];

const OP_020 = [
  SET_UP,
  "ПР: Оправка резьбовая специальная",
  "1. Фрезеровать пазы, выдерживая размеры 1,2.",
];

const HorizontalRuler = () => (
  <div className="flex h-[30px] items-start pt-[5px] pl-[943px] text-[10px] text-[#444]">
    <span className="h-[11px] w-[14px] bg-[#c6c6c6]" />
    <div className="relative flex h-[11px] w-[419px] bg-white pl-[15px]">
      {[2, 4, 6, 8, 10, 12, 14, 16, 18, 20, 22, 24, 26, 28].map((n) => (
        <span key={n} className="w-[30px] shrink-0 text-center leading-[11px]">{n}</span>
      ))}
      <svg className="absolute -top-[3px] -left-[5px]" width="10" height="22" viewBox="0 0 10 22" fill="#fff" stroke="#888">
        <path d="M.5.500h8v3l-4 4-4-4zM.5 15v-3l4-4 4 4v3zM.5 16h8v5h-8z" />
      </svg>
      <svg className="absolute top-[6px] -right-[4px]" width="10" height="8" viewBox="0 0 10 8" fill="#fff" stroke="#888">
        <path d="M.5 7.500V4L5 .5 9.500 4v3.500z" />
      </svg>
    </div>
    <span className="h-[11px] w-[11px] bg-[#c6c6c6]" />
  </div>
);

const VerticalRuler = () => (
  <div className="flex w-[22px] shrink-0 flex-col items-center">
    <div className="flex h-[21px] w-[22px] items-center justify-center bg-[#dadada]">
      <div className="flex size-[14px] items-center justify-center bg-white">
        <svg width="5" height="6" viewBox="0 0 5 6" fill="none" stroke="#555" strokeWidth="2">
          <path d="M1 0v5h4" />
        </svg>
      </div>
    </div>
    <div className="mt-[327px] flex w-[11px] flex-col text-[10px] text-[#444]">
      <span className="h-[17px] bg-[#c6c6c6]" />
      <span className="h-[11px] bg-white" />
      <span className="h-[28px] bg-[#c6c6c6]" />
      <span className="h-[11px] bg-white" />
      <span className="h-[43px] bg-[#c6c6c6]" />
      <div className="flex h-[185px] flex-col bg-white pt-[11px]">
        {[8, 10, 12, 14, 16, 18].map((n) => (
          <span key={n} className="flex h-[30px] w-[11px] items-center justify-center">
            <span className="-rotate-90">{n}</span>
          </span>
        ))}
      </div>
      <span className="h-[23px] bg-[#c6c6c6]" />
    </div>
  </div>
);

const Scrollbar = () => (
  <div className="flex w-[15px] shrink-0 flex-col pt-[3px] pb-[3px]">
    <button aria-label="Прокрутить вверх" className="flex h-[14px] items-center justify-center border border-[#ababab] bg-white">
      <svg width="7" height="4" viewBox="0 0 7 4"><path d="M0 4h7L3.500 0z" fill="#666" /></svg>
    </button>
    <div className="h-[84%] border border-t-0 border-[#ababab] bg-white" />
    <button aria-label="Прокрутить вниз" className="mt-auto flex h-[14px] items-center justify-center border border-[#ababab] bg-white">
      <svg width="7" height="4" viewBox="0 0 7 4"><path d="M0 0h7L3.500 4z" fill="#666" /></svg>
    </button>
  </div>
);

const Pages = () => (
  <div className="flex flex-wrap justify-center gap-[6px]">
    <TitlePage />
    <RoutePage />
    <OperationPage sheet="2" doc="6014000001" num="005" name="Токарная с ЧПУ" model="CKN1107" times={["0,1", "0,245", "20", "0,9"]} steps={OP_005} />
    <ContinuationPage />
    <SketchPage sheet="4" doc="2014000001" num="005"><SketchTurning /></SketchPage>
    <OperationPage sheet="5" doc="6014000002" num="010" name="Токарная с ЧПУ" model="CKN1107" times={["0,12", "0,269", "20", "0,57"]} steps={OP_010} />
    <div className="relative">
      <SketchPage sheet="6" doc="2014000002" num="010"><SketchThread /></SketchPage>
      <button aria-label="Выделить таблицу" className="absolute top-[7px] -left-[3px] flex size-[15px] items-center justify-center border border-[#aaa] bg-white text-[#444]">
        <Move size={12} />
      </button>
      <span className="absolute -right-[7px] -bottom-[5px] size-[15px] border border-[#bbb] bg-white" />
    </div>
    <OperationPage sheet="7" doc="6014000003" num="015" name={<Bad>Бесцентрошлифовальная</Bad>} model="3М182" times={["0,97", "0,348", "25", "1,42"]} steps={OP_015} />
    <SketchPage sheet="8" doc="2014000003" num="015"><SketchGrinding /></SketchPage>
    <OperationPage sheet="9" doc="6014000004" num="020" name="Вертикально-фрезерная" model="JET JMD-1" times={["0,07", "0,215", "18", "0,43"]} steps={OP_020} />
    <SketchPage sheet="10" doc="2014000004" num="020"><SketchMilling /></SketchPage>
    <Page />
  </div>
);

/* ---------- bottom bars ---------- */

const StatusBar = () => {
  const [zoom, setZoom] = useState(40);
  return (
    <footer className="flex h-[22px] shrink-0 items-center border-t border-[#cfcfcf] bg-[#f3f3f3] px-2 text-[11px] text-[#444]">
      <span>Страница 7 из 12</span>
      <span className="ml-[19px]">Число слов: 975</span>
      <svg className="ml-[19px]" width="15" height="13" viewBox="0 0 15 13" fill="none" stroke="#666">
        <path d="M7 2.500L5 .5H.5v10H5l2 2 2-2h1M7 2.500L9 .5h5v3M7 2.500v9M9 4l5 5M14 4L9 9" />
      </svg>
      <span className="ml-[17px]">русский</span>
      <div className="ml-auto flex h-full items-center">
        <button aria-label="Режим чтения" className="flex h-full w-10 items-center justify-center">
          <svg width="15" height="13" viewBox="0 0 15 13" fill="none" stroke="#666">
            <path d="M7.500 2L5 .5H.5v10H5L7.500 12 10 10.500h4.500V.5H10zM7.500 2v10M2 3h3.500M2 5.500h3.500M2 8h3.500M9.500 3H13M9.500 5.500H13M9.500 8H13" />
          </svg>
        </button>
        <button aria-label="Разметка страницы" className="flex h-full w-10 items-center justify-center bg-[#c5c5c5]">
          <svg width="14" height="13" viewBox="0 0 14 13" fill="#eee" stroke="#555">
            <path d="M.5.5h13v12H.5zM3 3.500h8M3 5.500h8M3 7.500h8M3 9.500h8" />
          </svg>
        </button>
        <button aria-label="Веб-документ" className="flex h-full w-10 items-center justify-center">
          <svg width="14" height="13" viewBox="0 0 14 13" fill="none" stroke="#666">
            <path d="M5 11.500H.5V.5h11V5M2.500 3h7M2.500 5.500h4M2.500 8H5" />
            <circle cx="9.500" cy="9" r="3.500" fill="#666" />
            <path d="M8 8l2 1 1 2" stroke="#eee" />
          </svg>
        </button>
        <button aria-label="Уменьшить" className="ml-[4px]"><Minus size={12} /></button>
        <input
          type="range"
          aria-label="Масштаб"
          min="10"
          max="190"
          value={zoom}
          onChange={(e) => setZoom(e.target.value)}
          className="mx-[3px] h-[12px] w-[100px] appearance-none bg-[linear-gradient(#999,#999),linear-gradient(#999,#999)] bg-[length:100%_1px,1px_7px] bg-center bg-no-repeat [&::-webkit-slider-thumb]:h-[11px] [&::-webkit-slider-thumb]:w-[5px] [&::-webkit-slider-thumb]:appearance-none [&::-webkit-slider-thumb]:bg-[#666]"
        />
        <button aria-label="Увеличить"><Plus size={12} /></button>
        <output className="ml-[10px] w-[31px] whitespace-nowrap">{zoom} %</output>
      </div>
    </footer>
  );
};

const TaskItem = ({ active, className, children }) => (
  <button
    className={clsx(
      "flex h-full w-[158px] items-start rounded-t-xs border border-b-0 border-[#8d949b] pt-[3px]",
      active ? "bg-linear-to-r from-[#e3eaf0] to-[#8fa0ae]" : "bg-linear-to-r from-[#8b9299] to-[#343d47]",
      className
    )}
  >
    {children}
  </button>
);

const Taskbar = () => (
  <div className="flex h-2 shrink-0 overflow-hidden border-t border-[#3b4a59] bg-linear-to-b from-[#1d2935] to-[#0b131c]">
    <button aria-label="Пуск" className="mt-px ml-[14px] h-7 w-7 shrink-0 rounded-full bg-[#9fb8cf]" />
    <button aria-label="Браузер" className="mt-[2px] ml-[35px] h-6 w-6 shrink-0 rounded-full bg-[#e0402f]" />
    <button aria-label="Почта" className="mt-[2px] ml-[38px] h-6 w-6 shrink-0 rounded-full bg-[#2f86dd]" />
    <TaskItem className="ml-[22px]"><span className="ml-2 h-4 w-8 bg-[#123744] ring-1 ring-[#31b3cf]" /></TaskItem>
    <TaskItem className="ml-[3px]"><span className="ml-2 h-4 w-3 skew-x-12 bg-[#1111a8]" /><span className="ml-1 h-4 w-3 bg-[#1111a8]" /></TaskItem>
    <span className="mt-[3px] ml-[25px] size-5 shrink-0 rounded-full bg-[#111]" />
    <svg className="mt-[2px] ml-[46px] shrink-0" width="16" height="12" viewBox="0 0 16 12"><path d="M8 0l8 12H0z" fill="#ffe32b" /></svg>
    <TaskItem className="ml-[21px]"><span className="ml-3 h-6 w-6 rounded-full bg-[#e0402f]" /></TaskItem>
    <TaskItem active className="ml-[3px]"><span className="mt-px ml-4 h-5 w-6 bg-[#41a0e6]" /></TaskItem>
    <button aria-label="Показать рабочий стол" className="ml-auto h-full w-[14px] border border-[#777] bg-[#3c444c]" />
  </div>
);

const App = () => (
  <div className="flex h-screen flex-col overflow-hidden bg-[#e6e6e6] font-['Open_Sans','Noto_Sans',sans-serif]">
    <Header />
    <Ribbon />
    <main className="flex min-h-0 flex-1">
      <VerticalRuler />
      <div className="min-w-0 flex-1 overflow-hidden">
        <HorizontalRuler />
        <Pages />
      </div>
      <Scrollbar />
      <span className="w-px" />
    </main>
    <StatusBar />
    <Taskbar />
  </div>
);

export default App;
